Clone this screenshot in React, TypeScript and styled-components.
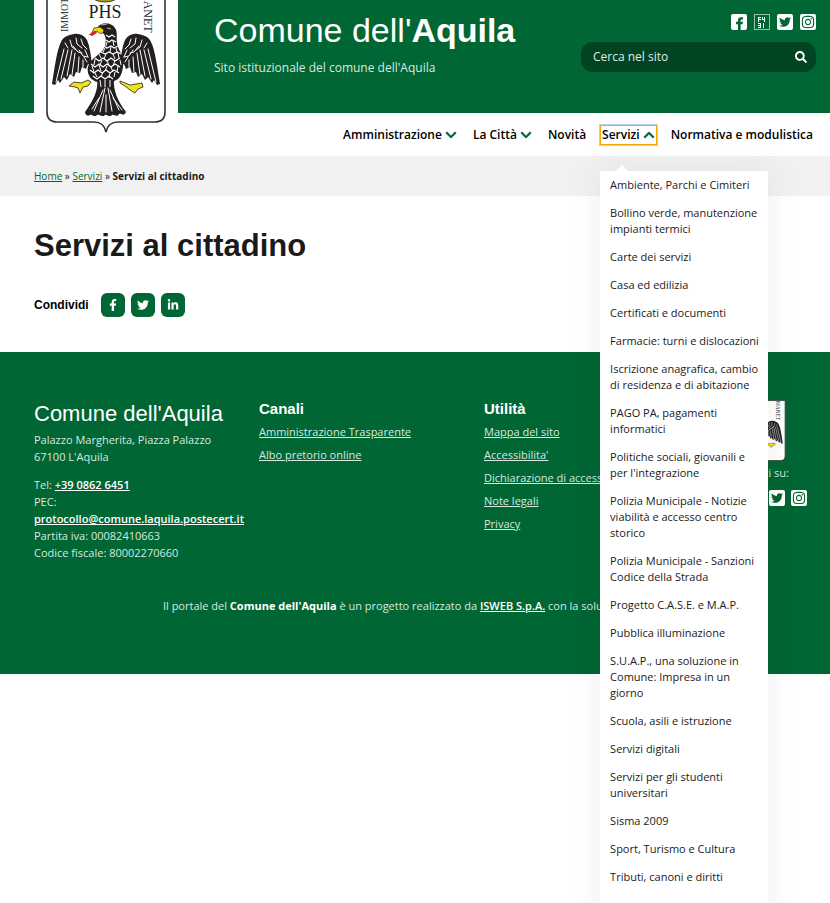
import React from "react";
import styled, { createGlobalStyle, css } from "styled-components";
import {
  FaChevronDown,
  FaChevronUp,
  FaFacebookF,
  FaTwitter,
  FaLinkedinIn,
  FaSearch,
  FaInstagram,
} from "react-icons/fa";

const green = "#006633";
const sans = '"Open Sans", "Noto Sans", sans-serif';
const heading = '"Liberation Sans", Arial, sans-serif';

const GlobalStyle = createGlobalStyle`
  *, *::before, *::after { box-sizing: border-box; }
  body {
    margin: 0;
    background: #fff;
    color: #1a1a1a;
    font: 11px/16px ${sans};
    overflow-x: hidden;
  }
  ul { list-style: none; margin: 0; padding: 0; }
  h1, h2, h3, p { margin: 0; }
  a { color: inherit; }
`;

const Page = styled.div`
  height: 100vh;
  overflow: hidden;
`;

const Header = styled.header`
  background: ${green};
  color: #fff;
  height: 113px;
  display: flex;
  align-items: flex-start;
  padding: 0 14px 0 34px;
`;

const LogoLink = styled.a`
  display: block;
  width: 144px;
  height: 145px;
  flex: none;
  background: #fff;
  overflow: hidden;
  margin-right: 36px;
`;

const Brand = styled.div`
  flex: 1;
  padding-top: 10px;
`;

const SiteName = styled.p`
  font: 34px/40px ${heading};
`;

const Tagline = styled.p`
  font-size: 12px;
  line-height: 18px;
  margin-top: 9px;
  color: #d9e8e0;
`;

const Tools = styled.div`
  width: 235px;
  display: flex;
  flex-direction: column;
  align-items: flex-end;
  padding-top: 14px;
  gap: 12px;
`;

const SocialList = styled.ul<{ $gap: number }>`
  display: flex;
  gap: ${(p) => p.$gap}px;

  a { display: block; height: 16px; }
  svg { display: block; }
`;

const SearchBox = styled.form`
  display: flex;
  align-items: center;
  width: 100%;
  height: 30px;
  border-radius: 12px;
  background: #004422;
  padding: 0 9px 0 12px;

  input {
    flex: 1;
    min-width: 0;
    border: 0;
    padding: 0;
    outline: 0;
    background: transparent;
    color: #fff;
    font: 12px/18px ${sans};
  }
  input::placeholder { color: #e0eae5; opacity: 1; }
  button {
    display: flex;
    border: 0;
    padding: 0;
    background: transparent;
    color: #fff;
    font-size: 12px;
  }
`;

const Nav = styled.nav`
  display: flex;
  justify-content: flex-end;
  align-items: center;
  gap: 12px;
  height: 43px;
  padding: 1px 15px 0 178px;
`;

const NavItem = styled.div`
  position: relative;
`;

const NavLink = styled.a<{ $open?: boolean }>`
  display: flex;
  align-items: center;
  gap: 3px;
  height: 20px;
  padding: 0 2px;
  color: #000;
  font-weight: 600;
  font-size: 12px;
  line-height: 18px;
  white-space: nowrap;
  text-decoration: none;
  ${(p) =>
    p.$open &&
    css`
      outline: 1px solid #b5d3ee;
      border: 1px solid #ffa500;
      padding: 0 1px;
    `}
  svg {
    color: ${green};
    font-size: 12px;
    stroke: ${green};
    stroke-width: 16px;
  }
`;

const Submenu = styled.ul`
  position: absolute;
  z-index: 5;
  top: 46px;
  left: 0;
  width: 168px;
  padding: 0 6px 50px 10px;
  background: #fff;
  box-shadow: 0 0 30px 5px rgba(0, 0, 0, 0.05);

  &::before {
    content: "";
    position: absolute;
    top: -6px;
    left: 16px;
    border: 6px solid transparent;
    border-top: 0;
    border-bottom-color: #fff;
  }
  li { padding: 6px 0; }
  a {
    display: block;
    color: #1a1a1a;
    text-decoration: none;
  }
`;

const Breadcrumb = styled.nav`
  height: 40px;
  padding: 12px 34px;
  background: #f1f1f1;
  font-size: 10px;

  a { color: ${green}; }
`;

const Main = styled.main`
  padding: 32px 34px 35px;
`;

const Title = styled.h1`
  font: bold 31px/36px ${heading};
`;

const Share = styled.div`
  display: flex;
  align-items: center;
  gap: 6px;
  margin-top: 29px;

  strong {
    font: bold 12px/18px ${heading};
    margin-right: 6px;
    color: #000;
  }
  a {
    display: flex;
    align-items: center;
    justify-content: center;
    width: 24px;
    height: 24px;
    border-radius: 6px;
    background: ${green};
    color: #fff;
    font-size: 12px;
  }
`;

const Footer = styled.footer`
  background: ${green};
  color: #d9e8e0;
  padding: 48px 23px 60px 34px;
`;

const Columns = styled.div`
  display: grid;
  grid-template-columns: 225fr 225fr 225fr 98fr;
  min-height: 170px;
`;

const FooterTitle = styled.h2`
  font: 22px/28px ${heading};
  color: #fff;
  white-space: nowrap;
  margin-bottom: 3px;
`;

const Contact = styled.div`
  line-height: 17px;

  p + p { margin-top: 11px; }
  a { font-weight: 600; color: #fff; }
`;

const LinkColumn = styled.div`
  h3 {
    font: bold 15px/18px ${heading};
    color: #fff;
    margin-bottom: 6px;
  }
  li { margin-bottom: 7px; white-space: nowrap; }
`;

const FollowColumn = styled.div`
  display: flex;
  flex-direction: column;
  align-items: flex-end;

  p { margin: 4px 18px 9px 0; white-space: nowrap; }
`;

const SmallCrest = styled.div`
  margin-right: 21px;
  height: 61px;
`;

const Credits = styled.p`
  text-align: center;
  margin: 28px 0 0;
  padding-left: 10px;
  white-space: nowrap;

  strong, a { color: #fff; }
  a { font-weight: 600; }
`;

const Wing = () => (
  <>
    <path
      d="M58 66 C57 56 56 47 53 40 C50 35 45 33 40 34 C34 35 29 37 27 42 C23 50 21 65 18 84 L21 85 L24 80 L26 83 L30 77 L33 80 L36 74 L40 77 L42 72 L46 73 L48 67 L52 69 L54 64 Z"
      fill="#231f20"
    />
    <g stroke="#fff" strokeWidth="1" fill="none" strokeLinecap="round">
      <path d="M30 49 L22 82 M34 50 L27 79 M38 50 L33 76 M41 53 L38 75 M45 57 L44 72 M49 60 L49 67" />
      <path d="M31 43 l3 5 M36 40 l2 7 l4 3 M42 38 l1 6 l5 4 M47 39 l2 6 l4 4 M39 46 l5 6 l4 1 M45 50 l4 6 l5 1 M51 50 l3 7 M50 57 l3 5" />
    </g>
  </>
);

const Eagle = () => (
  <g>
    <Wing />
    <g transform="translate(144 0) scale(-1 1)"><Wing /></g>
    <g fill="#231f20">
      <path d="M64 27 C67 22 77 22 81 28 C84 32 82 37 83 43 C84 50 88 53 89 59 C90 66 88 76 84 79 C79 83 64 84 59 80 C54 77 53 70 54 67 C56 59 64 56 69 50 C72 45 73 39 70 34 L66 31 Z" />
      <path d="M63 79 L80 79 C79 91 84 101 92 112 C90 117 87 113 85 114 C83 118 80 114 78 115 C75 118 73 114 71 115 C68 118 66 114 63 115 C60 118 58 114 56 115 C53 117 51 114 51 112 C58 102 65 91 63 79 Z" />
    </g>
    <path d="M69 90 L60 111 M71 88 L66 112 M72 95 L72 112 M74 88 L78 111 M76 90 L85 110 M65 98 l-7 11 M79 98 l9 12" stroke="#fff" strokeLinecap="round" />
    <path
      d="M72 35 l3 2 l3 -2 l3 2 M72 40 l3 2 l3 -2 l4 2 M70 46 l3 2 l4 -2 l3 2 l4 -2 M67 52 l4 2 l4 -2 l4 2 l4 -2 l4 2 M61 58 l4 3 l4 -3 l4 3 l4 -3 l4 3 l5 -3 M57 64 l4 3 l4 -3 l4 3 l4 -3 l4 3 l4 -3 l5 3 M56 70 l4 3 l4 -3 l4 3 l4 -3 l4 3 l4 -3 l5 3 M59 76 l4 3 l4 -3 l4 3 l4 -3 l4 3"
      fill="none"
      stroke="#fff"
      strokeWidth="1.2"
    />
    <path
      d="M73 42 l-1 4 M79 41 l1 5 M71 48 l-2 4 M77 46 l-1 6 M82 48 l1 4 M65 54 l2 4 M72 54 l-2 5 M79 54 l2 5 M84 53 l1 5 M61 59 l-1 6 M68 60 l-2 5 M73 61 l2 4 M81 60 l-2 6 M86 60 l1 5 M58 66 l2 6 M65 65 l2 6 M73 66 l-2 5 M77 67 l2 5 M84 66 l-1 6 M61 73 l2 4 M69 72 l-2 5 M76 73 l-1 5 M81 72 l-1 5 M66 80 l1 7 M71 80 v7 M76 80 v7"
      stroke="#fff"
    />
    <path d="M66 27 L60 28 L58 33 L63 31 C66 35 69 34 70 30 Z" fill="#f2d800" stroke="#231f20" strokeWidth=".7" />
    <path d="M62 31 C58 31 56 35 54 34 L58 36 L63 33 Z" fill="#d8232a" />
    <path d="M67 25 l6 -1 M73 28 l4 1" stroke="#fff" strokeWidth=".7" />
    <g fill="#f2e21b" stroke="#231f20" strokeWidth=".8">
      <path d="M54 80 L47 83 L40 82 L35 86 L41 87 L44 88 L46 93 L49 87 L54 86 L57 82 Z" />
      <path d="M86 81 L96 85 L102 84 L108 83 L109 87 L104 89 L101 93 L96 90 L91 86 L86 83 Z" />
    </g>
  </g>
);

const Crest = ({ small = false }: { small?: boolean }) => (
  <svg
    width={small ? 55 : 144}
    height={small ? 66 : 145}
    viewBox={small ? "11 -12 122 146" : "0 0 144 145"}
    role="img"
    aria-label="Stemma del Comune dell'Aquila"
  >
    <path
      d="M13 -11 V112 Q13 122 23 122 H60 Q70 122 72 132 Q74 122 84 122 H121 Q131 122 131 112 V-11 Z"
      fill="#fff"
      stroke="#333"
      strokeWidth="1.6"
    />
    <ellipse cx="71" cy="-4" rx="13" ry="6" fill="#a89a1c" stroke="#231f20" strokeWidth=".8" />
    <text x="71" y="18" textAnchor="middle" fontFamily="Liberation Serif" fontSize="18" fill="#231f20">PHS</text>
    <text transform="translate(34 32) rotate(-90)" fontFamily="Liberation Serif" fontSize="10" fill="#333">IMMOTA</text>
    <text transform="translate(110 -10) rotate(90)" fontFamily="Liberation Serif" fontSize="12" fill="#333">MANET</text>
    <Eagle />
  </svg>
);

const box = "M2 0 H14 Q16 0 16 2 V14 Q16 16 14 16 H2 Q0 16 0 14 V2 Q0 0 2 0 Z";

const FacebookSquare = () => (
  <svg width="16" height="16" viewBox="0 0 16 16">
    <path d={box} fill="#fff" />
    <path d="M7 16 V10.200 H5 V7.800 H7 V6.300 Q7 3.200 10 3.200 H12 V5.400 H10.800 Q9.600 5.400 9.600 6.600 V7.800 H12 L11.600 10.200 H9.600 V16 Z" fill={green} />
  </svg>
);

const TwitterSquare = () => (
  <svg width="16" height="16" viewBox="0 0 16 16">
    <path d={box} fill="#fff" />
    <FaTwitter x="2" y="2" size={12} color={green} />
  </svg>
);

const InstagramSquare = () => (
  <svg width="16" height="16" viewBox="0 0 16 16">
    <path d={box} fill="#fff" />
    <FaInstagram x="1" y="1" size={14} color={green} />
  </svg>
);

const MissingGlyph = () => (
  <svg width="16" height="16" viewBox="0 0 16 16" fill="none" stroke="#fff" shapeRendering="crispEdges">
    <path d="M.5 .5 H15.500 V15.500 H.5 Z" opacity=".6" />
    <path d="M7 3.500 H4.500 V8 M4 5.500 H7 M8.500 3 V5.500 H11 M10.500 3 V8 M4 9.500 H6.500 V14 M4 11.500 H6 M4 13.500 H7 M9.500 9 V14" />
  </svg>
);

const menu = [
  "Ambiente, Parchi e Cimiteri",
  "Bollino verde, manutenzione impianti termici",
  "Carte dei servizi",
  "Casa ed edilizia",
  "Certificati e documenti",
  "Farmacie: turni e dislocazioni",
  "Iscrizione anagrafica, cambio di residenza e di abitazione",
  "PAGO PA, pagamenti informatici",
  "Politiche sociali, giovanili e per l'integrazione",
  "Polizia Municipale - Notizie viabilità e accesso centro storico",
  "Polizia Municipale - Sanzioni Codice della Strada",
  "Progetto C.A.S.E. e M.A.P.",
  "Pubblica illuminazione",
  "S.U.A.P., una soluzione in Comune: Impresa in un giorno",
  "Scuola, asili e istruzione",
  "Servizi digitali",
  "Servizi per gli studenti universitari",
  "Sisma 2009",
  "Sport, Turismo e Cultura",
  "Tributi, canoni e diritti",
];

const channels = ["Amministrazione Trasparente", "Albo pretorio online"];
const utilities = ["Mappa del sito", "Accessibilita'", "Dichiarazione di accessibilità", "Note legali", "Privacy"];

const Links = ({ items }: { items: string[] }) => (
  <ul>
    {items.map((item) => (
      <li key={item}><a href="#">{item}</a></li>
    ))}
  </ul>
);

const Social = ({ gap }: { gap: number }) => (
  <SocialList $gap={gap}>
    <li><a href="#" aria-label="Facebook"><FacebookSquare /></a></li>
    <li><a href="#" aria-label="YouTube"><MissingGlyph /></a></li>
    <li><a href="#" aria-label="Twitter"><TwitterSquare /></a></li>
    <li><a href="#" aria-label="Instagram"><InstagramSquare /></a></li>
  </SocialList>
);

export default function App() {
  return (
    <Page>
      <GlobalStyle />
      <Header>
        <LogoLink href="#"><Crest /></LogoLink>
        <Brand>
          <SiteName>Comune dell'<strong>Aquila</strong></SiteName>
          <Tagline>Sito istituzionale del comune dell'Aquila</Tagline>
        </Brand>
        <Tools>
          <Social gap={7} />
          <SearchBox>
            <input type="text" aria-label="Cerca nel sito" placeholder="Cerca nel sito" />
            <button type="submit" aria-label="Cerca"><FaSearch /></button>
          </SearchBox>
        </Tools>
      </Header>
      <Nav aria-label="Menu principale">
        <NavItem><NavLink href="#">Amministrazione <FaChevronDown /></NavLink></NavItem>
        <NavItem><NavLink href="#">La Città <FaChevronDown /></NavLink></NavItem>
        <NavItem><NavLink href="#">Novità</NavLink></NavItem>
        <NavItem>
          <NavLink href="#" $open aria-expanded="true">Servizi <FaChevronUp /></NavLink>
          <Submenu>
            {menu.map((item) => (
              <li key={item}><a href="#">{item}</a></li>
            ))}
          </Submenu>
        </NavItem>
        <NavItem><NavLink href="#">Normativa e modulistica</NavLink></NavItem>
      </Nav>
      <Breadcrumb aria-label="Percorso">
        <a href="#">Home</a> » <a href="#">Servizi</a> » <strong>Servizi al cittadino</strong>
      </Breadcrumb>
      <Main>
        <Title>Servizi al cittadino</Title>
        <Share>
          <strong>Condividi</strong>
          <a href="#" aria-label="Condividi su Facebook"><FaFacebookF /></a>
          <a href="#" aria-label="Condividi su Twitter"><FaTwitter /></a>
          <a href="#" aria-label="Condividi su LinkedIn"><FaLinkedinIn /></a>
        </Share>
      </Main>
      <Footer>
        <Columns>
          <Contact>
            <FooterTitle>Comune dell'Aquila</FooterTitle>
            <p>Palazzo Margherita, Piazza Palazzo<br />67100 L'Aquila</p>
            <p>
              Tel: <a href="#">+39 0862 6451</a><br />
              PEC: <br /><a href="#">protocollo@comune.laquila.postecert.it</a><br />
              Partita iva: 00082410663<br />
              Codice fiscale: 80002270660
            </p>
          </Contact>
          <LinkColumn><h3>Canali</h3><Links items={channels} /></LinkColumn>
          <LinkColumn><h3>Utilità</h3><Links items={utilities} /></LinkColumn>
          <FollowColumn>
            <SmallCrest><Crest small /></SmallCrest>
            <p>Seguici su:</p>
            <Social gap={6} />
          </FollowColumn>
        </Columns>
        <Credits>
          Il portale del <strong>Comune dell'Aquila</strong> è un progetto realizzato da <a href="#">ISWEB S.p.A.</a> con la soluzione <a href="#">eCOMUNE</a>
        </Credits>
      </Footer>
    </Page>
  );
}
